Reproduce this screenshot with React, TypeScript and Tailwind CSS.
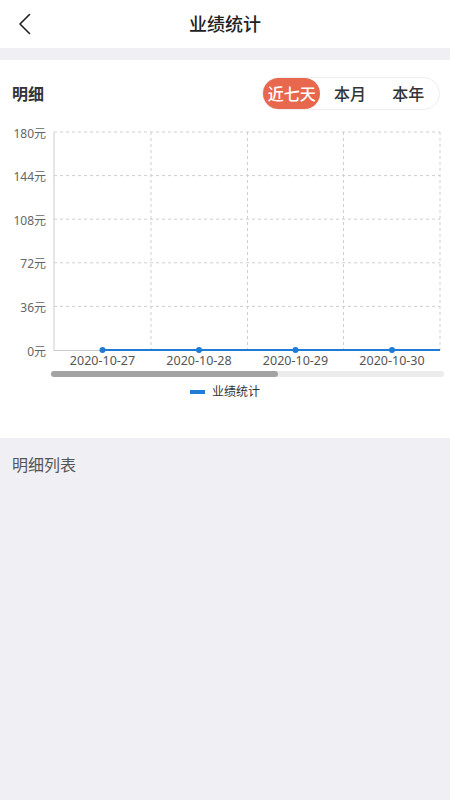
import React from "react";

const FONT = '"Noto Sans", "Noto Sans CJK SC", sans-serif';

function Chart() {
  const gridY = [12, 55.6, 99.2, 142.8, 186.4, 230];
  const labels = ["180元", "144元", "108元", "72元", "36元", "0元"];
  const vx = [151, 247.5, 343.5, 440];
  const px = [102.5, 199, 295.5, 392];
  const dates = ["2020-10-27", "2020-10-28", "2020-10-29", "2020-10-30"];
  return (
    <svg width="450" height="290" viewBox="0 0 450 290" className="block" style={{ fontFamily: FONT }}>
      {gridY.slice(0, 5).map((y, i) => (
        <line key={i} x1="54" x2="440" y1={y} y2={y} stroke="#cfcfcf" strokeWidth="1" strokeDasharray="3 3" />
      ))}
      {vx.map((x, i) => (
        <line key={i} x1={x} x2={x} y1="12" y2="230" stroke="#cfcfcf" strokeWidth="1" strokeDasharray="3 3" />
      ))}
      <line x1="54" x2="54" y1="12" y2="231" stroke="#cccccc" strokeWidth="1" />
      <line x1="54" x2="440" y1="230.5" y2="230.5" stroke="#cccccc" strokeWidth="1" />
      {labels.map((l, i) => (
        <text key={i} x="46" y={gridY[i] + 5.5} textAnchor="end" fontSize="12" fill="#666">
          {l}
        </text>
      ))}
      <line x1="102.5" x2="440" y1="230" y2="230" stroke="#1f7bd4" strokeWidth="2" />
      {px.map((x, i) => (
        <circle key={i} cx={x} cy="230" r="3" fill="#1f7bd4" />
      ))}
      {dates.map((d, i) => (
        <text key={i} x={px[i]} y="245" textAnchor="middle" fontSize="12.5" fill="#555">
          {d}
        </text>
      ))}
      <rect x="51" y="251" width="393" height="6" rx="3" fill="#ececec" />
      <rect x="51" y="251" width="227" height="6" rx="3" fill="#a3a3a3" />
      <rect x="190" y="270" width="15" height="4" fill="#1f7bd4" />
      <text x="212" y="276" fontSize="12" fill="#333">
        业绩统计
      </text>
    </svg>
  );
}

export default function App() {
  return (
    <div className="w-[450px] min-h-[800px] bg-[#efeff4]" style={{ fontFamily: FONT }}>
      <div className="relative h-12 bg-white flex items-center justify-center">
        <svg className="absolute left-[17px] top-[13px]" width="16" height="22" viewBox="0 0 16 22">
          <path d="M12.5 1.5 L3 11 L12.5 20.5" fill="none" stroke="#222" strokeWidth="1.6" strokeLinecap="round" strokeLinejoin="round" />
        </svg>
        <span className="text-[18px] text-[#222] font-medium">业绩统计</span>
      </div>
      <div className="h-3" />
      <div className="bg-white h-[378px]">
        <div className="flex items-center justify-between pt-[17px] pl-3 pr-[10px]">
          <span className="text-[16px] font-bold text-[#333]">明细</span>
          <div className="flex items-center h-[33px] w-[178px] rounded-full border border-[#eeeeee] text-[16px]">
            <span className="h-[31px] w-[58px] rounded-full bg-[#e8684e] text-white flex items-center justify-center font-medium">近七天</span>
            <span className="w-[60px] text-center text-[#333] font-medium">本月</span>
            <span className="w-[60px] text-center text-[#333] font-medium pr-[2px]">本年</span>
          </div>
        </div>
        <div className="mt-[10px]">
          <Chart />
        </div>
      </div>
      <div className="px-3 pt-[15px] text-[16px] text-[#555]">明细列表</div>
    </div>
  );
}
